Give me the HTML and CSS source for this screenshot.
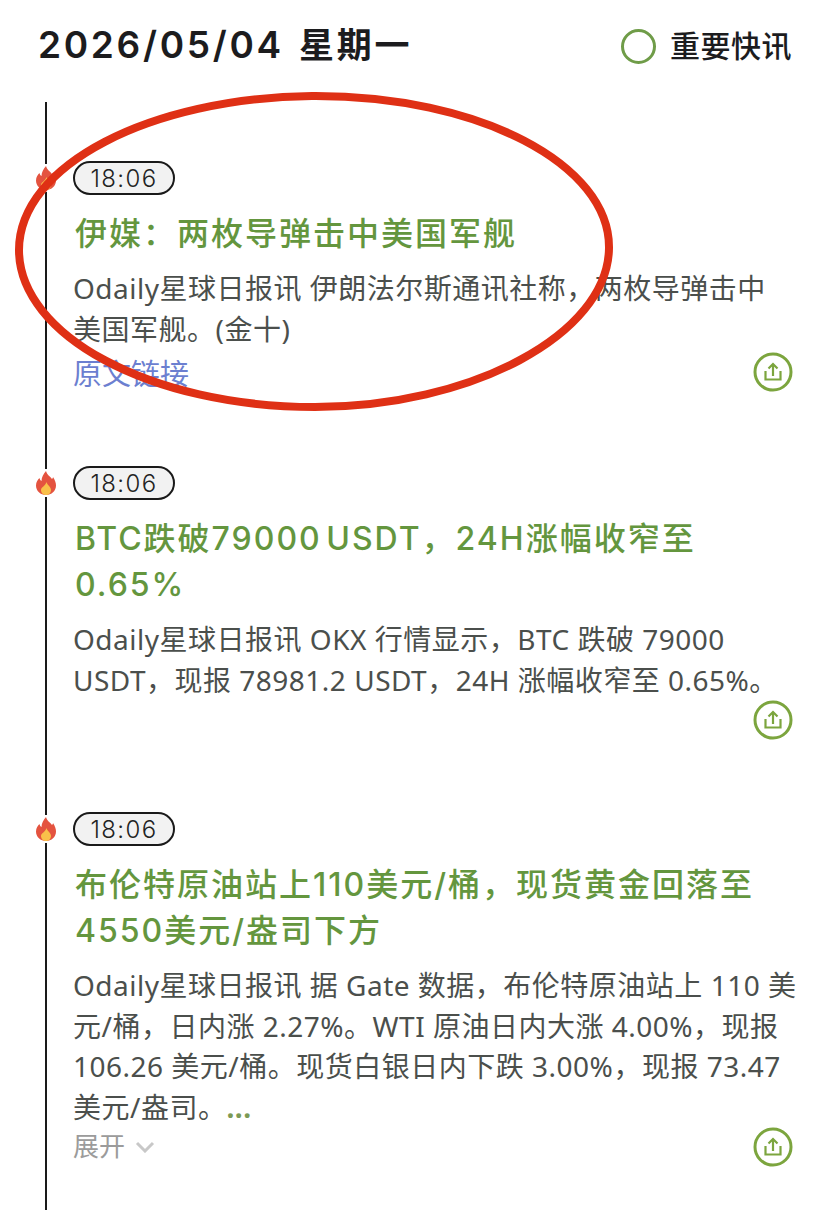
FILE: index.html
```html
<!DOCTYPE html>
<html lang="zh-CN">
<head>
    <meta charset="utf-8" />
    <meta name="viewport" content="width=device-width, initial-scale=1.0" />
    <title>快讯</title>
    <link rel="stylesheet" href="styles.css">
</head>
<body>
    <header class="top">
        <h1 class="date">2026/05/04 <span class="week">星期一</span></h1>
        <div class="filter">
            <span class="radio"></span>
            <span class="filter-label">重要快讯</span>
        </div>
    </header>

    <main class="timeline">
        <article class="item">
            <svg class="flame" viewBox="0 0 20 24"><use href="#flame-icon"></use></svg>
            <div class="time">18:06</div>
            <h2 class="headline">伊媒：两枚导弹击中美国军舰</h2>
            <p class="body">Odaily星球日报讯 伊朗法尔斯通讯社称，两枚导弹击中<br>美国军舰。(金十)</p>
            <div class="foot foot-link">
                <a class="source" href="#">原文链接</a>
                <svg class="share" viewBox="0 0 40 40"><use href="#share-icon"></use></svg>
            </div>
        </article>

        <article class="item">
            <svg class="flame" viewBox="0 0 20 24"><use href="#flame-icon"></use></svg>
            <div class="time">18:06</div>
            <h2 class="headline">BTC跌破79000 USDT，24H涨幅收窄至<br>0.65%</h2>
            <p class="body">Odaily星球日报讯 OKX 行情显示，BTC 跌破 79000<br>USDT，现报 78981.2 USDT，24H 涨幅收窄至 0.65%。</p>
            <div class="foot">
                <svg class="share" viewBox="0 0 40 40"><use href="#share-icon"></use></svg>
            </div>
        </article>

        <article class="item">
            <svg class="flame" viewBox="0 0 20 24"><use href="#flame-icon"></use></svg>
            <div class="time">18:06</div>
            <h2 class="headline">布伦特原油站上110美元/桶，现货黄金回落至<br>4550美元/盎司下方</h2>
            <p class="body">Odaily星球日报讯 据 Gate 数据，布伦特原油站上 110 美<br>元/桶，日内涨 2.27%。WTI 原油日内大涨 4.00%，现报<br>106.26 美元/桶。现货白银日内下跌 3.00%，现报 73.47<br>美元/盎司。<span class="more">...</span></p>
            <div class="foot">
                <span class="expand">展开
                    <svg class="chevron" viewBox="0 0 20 12"><path d="M2 2 L10 10 L18 2"></path></svg>
                </span>
                <svg class="share" viewBox="0 0 40 40"><use href="#share-icon"></use></svg>
            </div>
        </article>
    </main>

    <!-- hand drawn circle over the first item -->
    <svg class="scribble" viewBox="0 0 828 1210">
        <path d="M312 96 C 480 95 610 165 609 248 C 608 335 470 407 315 407 C 150 407 19 335 19 250 C 19 165 150 98 312 96 Z"></path>
    </svg>

    <svg class="defs" width="0" height="0">
        <defs>
            <symbol id="flame-icon" viewBox="0 0 20 24">
                <path fill="#e4533f" d="M10 0 C11 4 14 5 16 8 C16.5 7.5 17 7 17 6 C19 9 20 12 20 14.5 C20 20 15.5 24 10 24 C4.5 24 0 20 0 14.5 C0 11 2 8.5 3.5 7 C3.8 8.5 4.5 9.5 5.5 10 C5.5 6 7.5 3 10 0 Z"></path>
                <path fill="#f9c04a" d="M10.5 11 C11 14 15 15.5 15 19 C15 22 12.5 24 10 24 C7.5 24 5 22 5 19 C5 16 9.5 15 10.5 11 Z"></path>
            </symbol>
            <symbol id="share-icon" viewBox="0 0 40 40">
                <circle cx="20" cy="20" r="18" fill="none" stroke="#7ca53e" stroke-width="3"></circle>
                <path fill="none" stroke="#7ca53e" stroke-width="2.2" d="M12.5 19 V27.5 H27.5 V19 M20 24 V12 M15.5 16.5 L20 12 L24.5 16.5"></path>
            </symbol>
        </defs>
    </svg>
</body>
</html>
```

FILE: styles.css
```css
* {
    box-sizing: border-box;
}

html, body {
    height: 1210px;
    overflow: hidden;
}

body {
    margin: 0;
    background-color: #fff;
    font-family: Inter, "Noto Sans CJK SC", sans-serif;
    position: relative;
}

.top {
    height: 102px;
    padding: 24px 36px 0 38px;
    display: flex;
    justify-content: space-between;
    align-items: flex-start;
}

.date {
    margin: 0;
    font-size: 37px;
    line-height: 42px;
    font-weight: 600;
    letter-spacing: 2.7px;
    word-spacing: 3px;
    color: #1c1c1e;
}

.week {
    font-size: 35px;
}

.filter {
    display: flex;
    align-items: center;
    gap: 14px;
}

.radio {
    width: 35px;
    height: 35px;
    border: 3.5px solid #6f9c48;
    border-radius: 50%;
}

.filter-label {
    font-size: 30px;
    line-height: 44px;
    font-weight: 500;
    letter-spacing: 0.5px;
    color: #1c1c1e;
}

.timeline {
    height: 1108px;
    margin-left: 45px;
    padding: 59px 35px 0 26px;
    border-left: 2px solid #1a1a1a;
}

.item {
    display: flow-root;
    position: relative;
    margin-bottom: 72px;
}

.item:last-child {
    margin-bottom: 0;
}

.flame {
    position: absolute;
    left: -37px;
    top: 3px;
    width: 20px;
    height: 28px;
    padding: 2px 0;
    background-color: #fff;
}

.time {
    width: 102px;
    height: 34px;
    border: 2px solid #1a1a1a;
    border-radius: 17px;
    background-color: #f2f2f2;
    color: #222;
    font-size: 24px;
    font-weight: 300;
    line-height: 31px;
    letter-spacing: 1.4px;
    text-align: center;
}

.headline {
    margin: 16px 0 11px;
    padding-left: 2px;
    font-size: 32px;
    line-height: 46px;
    font-weight: 500;
    letter-spacing: 2px;
    word-spacing: -6px;
    color: #64963e;
    white-space: nowrap;
}

.body {
    margin: 0;
    font-family: "Noto Sans", "Noto Sans CJK SC", sans-serif;
    font-size: 28px;
    line-height: 40.5px;
    letter-spacing: 0.5px;
    color: #4b4f4c;
    white-space: nowrap;
}

.more {
    color: #7c9a55;
    font-weight: 700;
}

.foot {
    display: flex;
    align-items: center;
    justify-content: flex-end;
    height: 40px;
}

.foot-link {
    margin: 3px 0 2px;
}

.source {
    margin-right: auto;
    padding-top: 6px;
    font-size: 29px;
    line-height: 40px;
    color: #6c7fd0;
    text-decoration: none;
}

.expand {
    margin-right: auto;
    display: flex;
    align-items: center;
    gap: 10px;
    font-size: 26px;
    line-height: 40px;
    color: #9b9b9b;
}

.chevron {
    width: 20px;
    height: 12px;
}

.chevron path {
    fill: none;
    stroke: #c8c8c8;
    stroke-width: 3;
}

.share {
    width: 40px;
    height: 40px;
}

.scribble {
    position: absolute;
    left: 0;
    top: 0;
    width: 828px;
    height: 1210px;
    pointer-events: none;
}

.scribble path {
    fill: none;
    stroke: #df3015;
    stroke-width: 8;
}

.defs {
    position: absolute;
}
```
